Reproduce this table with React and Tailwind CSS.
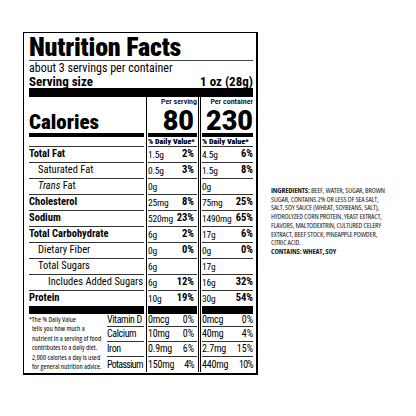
const nutrients = [
  { name: 'Total Fat', bold: true, a: ['1.5g', '2%'], b: ['4.5g', '6%'] },
  { name: 'Saturated Fat', indent: 'pl-[9px]', a: ['0.5g', '3%'], b: ['1.5g', '8%'] },
  { name: 'Fat', trans: true, indent: 'pl-[9px]', a: ['0g', ''], b: ['0g', ''] },
  { name: 'Cholesterol', bold: true, a: ['25mg', '8%'], b: ['75mg', '25%'] },
  { name: 'Sodium', bold: true, a: ['520mg', '23%'], b: ['1490mg', '65%'] },
  { name: 'Total Carbohydrate', bold: true, a: ['6g', '2%'], b: ['17g', '6%'] },
  { name: 'Dietary Fiber', indent: 'pl-[9px]', a: ['0g', '0%'], b: ['0g', '0%'] },
  { name: 'Total Sugars', indent: 'pl-[9px]', a: ['6g', ''], b: ['17g', ''] },
  { name: 'Includes Added Sugars', indent: 'pl-[19px]', a: ['6g', '12%'], b: ['16g', '32%'] },
  { name: 'Protein', bold: true, a: ['10g', '19%'], b: ['30g', '54%'] },
];

const vitamins = [
  { name: 'Vitamin D', a: ['0mcg', '0%'], b: ['0mcg', '0%'], h: 'h-[13px] border-b border-[#333]' },
  { name: 'Calcium', a: ['10mg', '0%'], b: ['40mg', '4%'], h: 'h-[15px] border-b border-[#333]' },
  { name: 'Iron', a: ['0.9mg', '6%'], b: ['2.7mg', '15%'], h: 'h-[15px] border-b border-[#333]' },
  { name: 'Potassium', a: ['150mg', '4%'], b: ['440mg', '10%'], h: 'h-[15px] tracking-[-0.7px]' },
];

const footnote = [
  'tells you how much a',
  'nutrient in a serving of food',
  'contributes to a daily diet.',
  '2,000 calories a day is used',
  'for general nutrition advice.',
];

const ingredients = [
  'SUGAR, CONTAINS 2% OR LESS OF SEA SALT,',
  'SALT, SOY SAUCE (WHEAT, SOYBEANS, SALT),',
  'HYDROLYZED CORN PROTEIN, YEAST EXTRACT,',
  'FLAVORS, MALTODEXTRIN, CULTURED CELERY',
  'EXTRACT, BEEF STOCK, PINEAPPLE POWDER,',
  'CITRIC ACID.',
];

// one row of the three column grid (name | per serving | per container)
function Cells({ h, line = '', name, a, b, nameCls = '', aCls = 'justify-between pr-[3px]', bCls = 'justify-between', items = 'items-center' }) {
  return (
    <div className={`flex ${h}`}>
      <div className="w-[117px] pr-[2px] flex">
        <div className={`flex-1 flex ${items} ${line} ${nameCls}`}>{name}</div>
      </div>
      <div className="w-[52px] border-l border-black px-[1px] flex">
        <div className={`flex-1 flex ${items} ${line} ${aCls}`}>{a}</div>
      </div>
      <div className="flex-1 border-l-[3px] border-double border-black pl-[1px] flex">
        <div className={`flex-1 flex ${items} ${line} ${bCls}`}>{b}</div>
      </div>
    </div>
  );
}

function Amount({ v }) {
  return (
    <>
      <span className="text-[9.5px] tracking-[-0.2px]">{v[0]}</span>
      <span className="font-bold text-[10.5px]">{v[1]}</span>
    </>
  );
}

function Mineral({ v }) {
  return (
    <>
      <span className="text-[10px] tracking-[-0.2px]">{v[0]}</span>
      <span className="text-[10px]">{v[1]}</span>
    </>
  );
}

export default function App() {
  return (
    <div className="w-[416px] h-[416px] bg-white flex items-start pl-[23px] pt-[32px] font-['Roboto_Condensed','Liberation_Sans',sans-serif] text-black">
      {/* Label */}
      <div className="w-[235px] shrink-0 border-t border-l border-r-2 border-b-2 border-black pl-[5px] pr-[3px] pt-[2px] pb-[1px]">
        <h1 className="h-[26px] text-[26px] font-black leading-[25px] tracking-[-0.2px] border-b border-[#444]">
          Nutrition Facts
        </h1>
        <div className="h-[13px] text-[12px] leading-[15px]">about 3 servings per container</div>
        <div className="flex h-[14px] items-end justify-between text-[13px] font-bold leading-[13px]">
          <span>Serving size</span>
          <span>1 oz (28g)</span>
        </div>
        <div className="h-[9px] bg-black" />

        <Cells
          h="h-[10px] text-[8px] leading-[10px] font-medium"
          items="items-end"
          name=""
          a="Per serving"
          b="Per container"
          aCls="justify-end"
          bCls="justify-end"
        />
        <Cells
          h="h-[30px]"
          items="items-end"
          line="border-b-4 border-black"
          name={<span className="text-[21px] font-black leading-[21px]">Calories</span>}
          a={<span className="font-['Roboto'] text-[27px] font-black leading-[24px]">80</span>}
          b={<span className="font-['Roboto'] text-[27px] font-black leading-[24px]">230</span>}
          aCls="justify-end pr-[3px]"
          bCls="justify-end"
        />
        <Cells
          h="h-[10px] text-[8px] font-black leading-[9px]"
          line="border-b border-[#333]"
          name=""
          a="% Daily Value*"
          b="% Daily Value*"
          aCls="justify-start"
          bCls="justify-start"
        />

        {nutrients.map((n, i) => {
          const last = i === nutrients.length - 1;
          return (
            <Cells
              key={i}
              h={`${last ? 'h-[15px]' : 'h-[16px]'} text-[10.5px] leading-none`}
              line={last ? '' : 'border-b border-[#333]'}
              nameCls={n.indent || ''}
              name={
                n.trans ? (
                  <span>
                    <i>Trans</i> Fat
                  </span>
                ) : (
                  <span className={n.bold ? 'font-bold' : ''}>{n.name}</span>
                )
              }
              a={<Amount v={n.a} />}
              b={<Amount v={n.b} />}
            />
          );
        })}
        <Cells h="h-[8px]" line="bg-black" name="" a="" b="" />

        {/* vitamins and footnote */}
        <div className="flex leading-none">
          <div className="w-[117px] pr-[2px] flex">
            <div className="w-[78px] shrink-0 pt-[1px] font-['Open_Sans'] font-stretch-75% text-[7.3px] leading-[9.4px] whitespace-nowrap">
              <div>*The % Daily Value</div>
              {footnote.map((l) => (
                <div key={l} className="pl-[3px]">
                  {l}
                </div>
              ))}
            </div>
            <div className="flex-1 min-w-0 flex flex-col text-[10px] tracking-[-0.4px] whitespace-nowrap">
              {vitamins.map((v) => (
                <div key={v.name} className={`flex items-center ${v.h}`}>
                  {v.name}
                </div>
              ))}
            </div>
          </div>
          <div className="w-[52px] border-l border-black px-[1px] flex flex-col">
            {vitamins.map((v) => (
              <div key={v.name} className={`flex items-center justify-between pr-[3px] ${v.h}`}>
                <Mineral v={v.a} />
              </div>
            ))}
          </div>
          <div className="flex-1 border-l-[3px] border-double border-black pl-[1px] flex flex-col">
            {vitamins.map((v) => (
              <div key={v.name} className={`flex items-center justify-between ${v.h}`}>
                <Mineral v={v.b} />
              </div>
            ))}
          </div>
        </div>
      </div>

      {/* Ingredients */}
      <div className="ml-[13px] mt-[154px] font-['Open_Sans'] font-stretch-75% text-[7.5px] leading-[8.7px] tracking-[-0.15px] whitespace-nowrap text-[#1c1c1c]">
        <div>
          <span className="font-bold">INGREDIENTS:</span> BEEF, WATER, SUGAR, BROWN
        </div>
        {ingredients.map((l) => (
          <div key={l}>{l}</div>
        ))}
        <div className="font-bold">CONTAINS: WHEAT, SOY</div>
      </div>
    </div>
  );
}
